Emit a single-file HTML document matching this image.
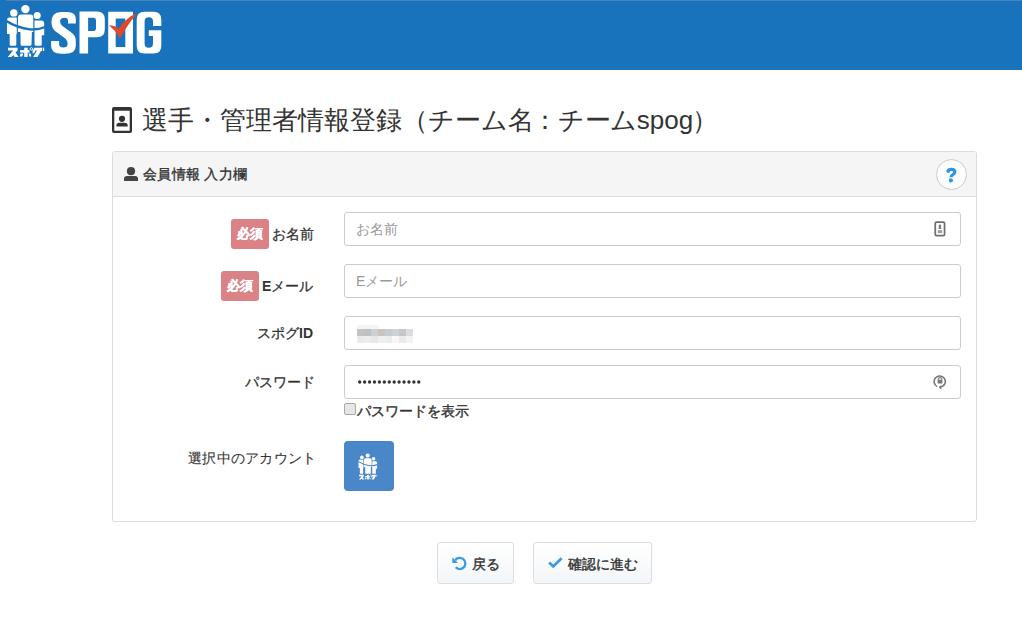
<!DOCTYPE html>
<html><head><meta charset="utf-8">
<style>
*{box-sizing:border-box;margin:0;padding:0}
html,body{width:1022px;height:622px;overflow:hidden;background:#fff;font-family:"Liberation Sans",sans-serif;color:#333}
.abs{position:absolute}
.hdr{position:absolute;left:0;top:0;width:1022px;height:70px;background:#1873bc}
.hdr .topline{position:absolute;left:6px;top:0;width:1016px;height:1px;background:#4a82b6}
.title{position:absolute;left:142px;top:104px;font-size:26px;line-height:32px;color:#333;white-space:nowrap}
.panel{position:absolute;left:112px;top:151px;width:865px;height:371px;border:1px solid #ddd;border-radius:3px}
.phead{position:absolute;left:0;top:0;width:863px;height:45px;background:#f5f5f5;border-bottom:1px solid #ddd;border-radius:2px 2px 0 0}
.phead .t{position:absolute;left:30px;top:14px;font-size:14px;font-weight:normal;line-height:17px;color:#333;white-space:nowrap;letter-spacing:0.3px;-webkit-text-stroke:0.35px #333}
.help{position:absolute;left:823px;top:7px;width:31px;height:31px;border:1px solid #ccc;border-radius:50%;background:#fdfdfd}
.lbl{position:absolute;font-size:14px;font-weight:normal;color:#333;line-height:18px;white-space:nowrap;-webkit-text-stroke:0.3px #333}
.lbl b{-webkit-text-stroke:0}
.req{position:absolute;width:38px;height:30px;background:#da8286;border-radius:3px;color:#fff;font-size:13px;font-weight:bold;line-height:30px;text-align:center;font-family:"Liberation Serif",serif;-webkit-text-stroke:0.35px #fff}
.inp{position:absolute;left:344px;width:617px;height:34px;border:1px solid #ccc;border-radius:3px;background:#fff}
.ph{position:absolute;left:11px;top:8px;font-size:14px;line-height:17px;color:#999;white-space:nowrap}
.btn{position:absolute;top:542px;height:42px;border:1px solid #ddd;border-radius:3px;background:linear-gradient(#fff,#f3f6f9)}
.btn .bt{position:absolute;font-size:14px;font-weight:normal;color:#333;line-height:18px;white-space:nowrap;-webkit-text-stroke:0.4px #333}
.dots{position:absolute;left:357.7px;top:380.6px}
.dots i{position:absolute;top:0;width:3.5px;height:3.4px;border-radius:50%;background:#3a3a3a}
.mos{position:absolute;left:357px;top:325px;width:56px;height:18px}
.mos i{position:absolute;width:7px}
</style></head><body>
<svg width="0" height="0" style="position:absolute">
 <defs>
  <symbol id="fam" viewBox="6 4 40 54">
   <g fill="#fff">
    <circle cx="13.8" cy="12.9" r="3.7"/>
    <circle cx="25.4" cy="9.1" r="4.2"/>
    <circle cx="37.2" cy="15.6" r="3.5"/>
    <path d="M7,20 Q7,17.6 9.5,17.6 L16.8,17.6 L16.8,34 L16.3,34 L16.3,44.5 Q16.3,45.7 15,45.7 L11,45.7 Q9.7,45.7 9.7,44.5 L9.7,34 L7,34 Z"/>
    <path d="M18,17.5 Q18,14.5 21,14.5 L30.3,14.5 Q33.3,14.5 33.3,17.5 L33.3,32 L31.9,32 L31.5,44.5 Q31.4,45.7 30,45.7 L22,45.7 Q20.6,45.7 20.6,44.5 L20.4,32 L17.9,32 Z"/>
    <path d="M34.5,20.6 L41.2,20.6 Q44.2,20.6 44.2,23.6 L44.2,35.3 L41.7,35.3 L41.7,44.5 Q41.7,45.7 40.5,45.7 L36,45.7 Q34.6,45.7 34.6,44.5 L34.5,35.3 Z"/>
   </g>
   <path d="M6,20.8 Q17,27.8 30,29.4 Q38,30 46,26.8" fill="none" style="stroke:var(--band,#1873bc)" stroke-width="2.3"/>
   <g fill="#fff">
    <path d="M8,47.7 H17.6 V50.4 L15.6,52.6 L18.6,56.9 H14.6 L13.3,55 L11.6,56.9 H7.8 L11.6,52.3 L13.2,50.6 H8 Z"/>
    <rect x="20.1" y="50.1" width="9.4" height="2.5"/>
    <rect x="24.2" y="47.7" width="3.5" height="9.2"/>
    <path d="M20.4,53.4 H23.3 L22.3,56.5 H19.8 Z M28.6,53.4 H30.8 L31.3,56.5 H29.2 Z"/>
    <path d="M34.6,47.7 H41.2 V50.6 L37.6,56.9 H33.2 L37,50.6 H35.6 L34,53.2 H32.6 V50.6 Z"/>
    <rect x="41" y="47.7" width="1.2" height="3.3"/><rect x="43" y="47.7" width="1.2" height="3.3"/>
   </g>
   <circle cx="31.4" cy="48.9" r="1.25" fill="none" stroke="#fff" stroke-width="0.9"/>
  </symbol>
 </defs>
</svg>

<div class="hdr"><div class="topline"></div>
 <svg class="abs" style="left:6px;top:4px" width="40" height="54"><use href="#fam" width="40" height="54"/></svg>
 <svg class="abs" style="left:0;top:0" width="170" height="70" viewBox="0 0 170 70">
  <path d="M75.8,23.5 L68,23.5 L68,20.5 Q68,17.8 64.5,17.8 Q60.1,17.8 60.1,21.5 Q60.1,24.2 62.5,26 L72,33 Q75.8,36 75.8,41 L75.8,46 Q75.8,53.8 65,53.8 L61.5,53.8 Q51.1,53.8 51.1,46 L51.1,40.9 L59.1,40.9 L59.1,44 Q59.1,47.5 63.3,47.5 Q67.6,47.5 67.6,44 Q67.6,40 64,37.5 L55,31 Q51.5,28 51.5,22 Q51.5,12 61,12 L67,12 Q75.8,12 75.8,19 Z" fill="#fff"/>
  <path d="M79.5,11.4 H97 Q104.8,11.4 104.8,19.2 V29.5 Q104.8,37.3 97,37.3 H88.1 V53.6 H79.5 Z M88.1,17.7 V31.1 H93.2 Q96,31.1 96,28.3 V20.5 Q96,17.7 93.2,17.7 Z" fill="#fff" fill-rule="evenodd"/>
  <path d="M108.2,11.8 H133 V53.6 H108.2 Z M115.7,18.5 V46.9 H125.3 V18.5 Z" fill="#fff" fill-rule="evenodd"/>
  <path d="M109,25.3 Q114,25 118.6,28.6 Q126,17.5 137.8,12.8 Q128.5,23 120,38.3 Q115.5,30.5 109,25.3 Z" fill="#e0492a"/>
  <path d="M144.5,11.8 H153.5 Q161.3,11.8 161.3,19.6 V26 H153 V30.2 H161.3 V45.8 Q161.3,53.6 153.5,53.6 H144.5 Q136.7,53.6 136.7,45.8 V19.6 Q136.7,11.8 144.5,11.8 Z M148.8,17.3 Q144.6,17.3 144.6,21.3 V43.8 Q144.6,47.8 148.8,47.8 Q153,47.8 153,43.8 V36 H148.8 V30.2 H153 V21.3 Q153,17.3 148.8,17.3 Z" fill="#fff" fill-rule="evenodd"/>
 </svg>
</div>

<svg class="abs" style="left:112px;top:107px" width="20" height="26" viewBox="0 0 20 26">
 <path d="M2,0 H18 Q20,0 20,2 V24 Q20,26 18,26 H2 Q0,26 0,24 V2 Q0,0 2,0 Z M2.3,3.8 V23.7 H17.7 V3.8 Z" fill="#333" fill-rule="evenodd"/>
 <circle cx="10" cy="11.8" r="3.1" fill="#333"/>
 <path d="M4.4,19.6 V18.4 Q4.4,15.8 7.4,15.8 H12.7 Q15.7,15.8 15.7,18.4 V19.6 Z" fill="#333"/>
</svg>
<div class="title">選手・管理者情報登録（チーム<span style="letter-spacing:-1.7px">名</span>：チ<span style="letter-spacing:-1.5px">ー</span>ムspo<span style="letter-spacing:-1.5px">g</span>）</div>

<div class="panel">
  <div class="phead">
   <svg class="abs" style="left:11px;top:15px" width="14" height="14" viewBox="0 0 14 14">
    <circle cx="7" cy="4.2" r="4.1" fill="#444"/>
    <path d="M0,14 V11.5 Q0,9 3,9 H11 Q14,9 14,11.5 V14 Z" fill="#444"/>
   </svg>
   <div class="t">会員情報 入力欄</div>
   <div class="help">
    <svg class="abs" style="left:9px;top:8px;overflow:visible" width="11" height="15" viewBox="0 0 11 15">
     <path d="M1.9,3.1 Q2.5,1.4 5.3,1.4 Q8.8,1.4 8.8,4 Q8.8,5.7 6.6,6.9 Q5,7.8 5,9.3" fill="none" stroke="#2f95e8" stroke-width="3.2"/><circle cx="2.2" cy="3.3" r="1.75" fill="#2f95e8"/>
     <circle cx="4.9" cy="12.4" r="2.1" fill="#2f95e8"/>
    </svg>
   </div>
  </div>
</div>

<div class="req" style="left:231px;top:219px">必須</div>
<div class="lbl" style="left:272px;top:225px">お名前</div>
<div class="inp" style="top:212px"><div class="ph">お名前</div>
 <svg class="abs" style="left:589px;top:8px" width="12" height="16" viewBox="0 0 12 16">
  <rect x="1.25" y="1.15" width="9.3" height="13.4" rx="1.4" fill="none" stroke="#6e6e6e" stroke-width="1.75"/>
  <circle cx="5.9" cy="4.9" r="1.3" fill="#777"/>
  <path d="M4.4,7.9 L5.3,5.6 H6.5 L7.4,7.9 Z" fill="#777"/>
  <rect x="3.8" y="9.2" width="4.3" height="2.9" fill="#9a9a9a"/>
 </svg>
</div>

<div class="req" style="left:221px;top:271px">必須</div>
<div class="lbl" style="left:262px;top:277px"><b>E</b>メール</div>
<div class="inp" style="top:264px"><div class="ph">Eメール</div></div>

<div class="lbl" style="left:257px;top:324px">スポグ<b>ID</b></div>
<div class="inp" style="top:316px"></div>
<div class="mos">
 <i style="left:0;top:0;height:4px;background:#f4f4f4;width:21px"></i>
 <i style="left:0;top:4px;height:7px;background:#c4c2c4"></i><i style="left:7px;top:4px;height:7px;background:#c2c0c2"></i><i style="left:14px;top:4px;height:7px;background:#cdd0d0"></i><i style="left:21px;top:4px;height:7px;background:#cbc3bf"></i><i style="left:28px;top:4px;height:7px;background:#c5cdd2"></i><i style="left:35px;top:4px;height:7px;background:#d2d2d2"></i><i style="left:42px;top:4px;height:7px;background:#c8c7c8"></i><i style="left:49px;top:4px;height:7px;background:#dcdde2"></i>
 <i style="left:0;top:11px;height:7px;background:#ebebeb"></i><i style="left:7px;top:11px;height:7px;background:#eeeded"></i><i style="left:14px;top:11px;height:7px;background:#e6e8e8"></i><i style="left:21px;top:11px;height:7px;background:#efefee"></i><i style="left:28px;top:11px;height:7px;background:#e8eef0"></i><i style="left:35px;top:11px;height:7px;background:#f7f7f7"></i><i style="left:42px;top:11px;height:7px;background:#ebe9e9"></i><i style="left:49px;top:11px;height:7px;background:#f3f3f5"></i>
</div>

<div class="lbl" style="left:244.5px;top:373px">パスワード</div>
<div class="inp" style="top:365px">
 <svg class="abs" style="left:588px;top:7px" width="14" height="18" viewBox="0 0 14 18">
  <path d="M4.2,13.6 A5.6,5.6 0 1 1 8.2,14" fill="none" stroke="#777" stroke-width="1.6"/>
  <path d="M5.6,14.2 L8.3,12 L8.3,16.4 Z" fill="#777"/>
  <path d="M5.2,6.9 Q5.2,4.6 7,4.6 Q8.8,4.6 8.8,6.9" fill="none" stroke="#888" stroke-width="1.1"/>
  <rect x="4.6" y="6.8" width="4.8" height="3.8" rx="0.6" fill="#777"/>
 </svg>
</div>
<svg class="abs" style="left:357.7px;top:380.3px" width="68" height="4" viewBox="0 0 68 4" fill="#333"><circle cx="1.70" cy="2" r="1.68"/><circle cx="6.62" cy="2" r="1.68"/><circle cx="11.55" cy="2" r="1.68"/><circle cx="16.47" cy="2" r="1.68"/><circle cx="21.40" cy="2" r="1.68"/><circle cx="26.32" cy="2" r="1.68"/><circle cx="31.25" cy="2" r="1.68"/><circle cx="36.18" cy="2" r="1.68"/><circle cx="41.10" cy="2" r="1.68"/><circle cx="46.02" cy="2" r="1.68"/><circle cx="50.95" cy="2" r="1.68"/><circle cx="55.88" cy="2" r="1.68"/><circle cx="60.80" cy="2" r="1.68"/></svg>
<div class="abs" style="left:344px;top:403px;width:12px;height:12px;border:1px solid #a8a8a8;border-radius:2px;background:#e6e6e6"></div>
<div class="lbl" style="left:357px;top:402px;-webkit-text-stroke:0.4px #333">パスワードを表示</div>

<div class="lbl" style="left:188px;top:449px;letter-spacing:0.28px;-webkit-text-stroke:0.1px #333">選択中のアカウント</div>
<div class="abs" style="left:344px;top:441px;width:50px;height:50px;background:#4a87c9;border-radius:4px">
 <svg class="abs" style="left:14px;top:12px;--band:#4a87c9" width="20" height="27"><use href="#fam" width="20" height="27"/></svg>
</div>

<div class="btn" style="left:437px;width:77px">
 <svg class="abs" style="left:14px;top:13px" width="15" height="15" viewBox="0 0 15 15">
  <path d="M3.2,4.2 A5.6,5.6 0 1 1 3.6,11.3" fill="none" stroke="#3a9ae8" stroke-width="2.3"/>
  <path d="M0.3,1.2 L0.3,7 L6,7 Z" fill="#3a9ae8"/>
 </svg>
 <div class="bt" style="left:34px;top:12px">戻る</div>
</div>
<div class="btn" style="left:533px;width:119px">
 <svg class="abs" style="left:14px;top:14px" width="15" height="12" viewBox="0 0 15 12">
  <path d="M1.2,5.6 L5.2,9.4 L13.6,1.2" fill="none" stroke="#3a9ae8" stroke-width="2.8"/>
 </svg>
 <div class="bt" style="left:34px;top:12px">確認に進む</div>
</div>
</body></html>
